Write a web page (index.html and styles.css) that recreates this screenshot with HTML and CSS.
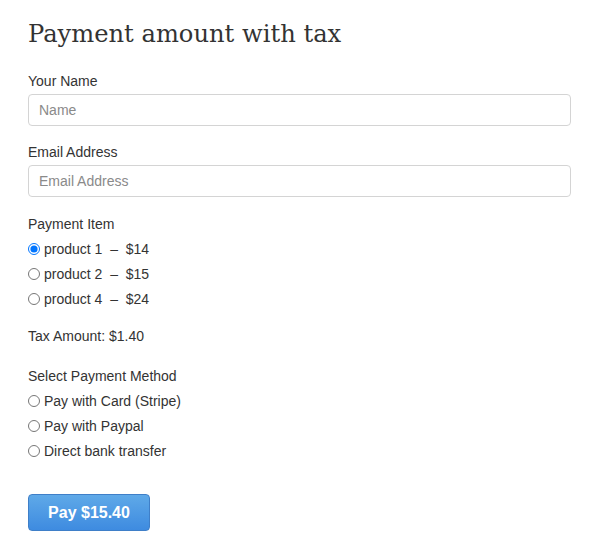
FILE: index.html
```html
<!DOCTYPE html>
<html lang="en">
<head>
  <meta charset="UTF-8" />
  <meta name="viewport" content="width=device-width, initial-scale=1.0" />
  <title>Payment amount with tax</title>
  <link rel="stylesheet" href="styles.css">
</head>
<body>
  <form class="pay-form">
    <h1>Payment amount with tax</h1>

    <div class="field">
      <label for="name">Your Name</label>
      <input type="text" id="name" placeholder="Name" />
    </div>

    <div class="field">
      <label for="email">Email Address</label>
      <input type="text" id="email" placeholder="Email Address" />
    </div>

    <div class="group">
      <div class="group-title">Payment Item</div>
      <label class="option"><input type="radio" name="item" checked /> product 1 &nbsp;–&nbsp; $14</label>
      <label class="option"><input type="radio" name="item" /> product 2 &nbsp;–&nbsp; $15</label>
      <label class="option"><input type="radio" name="item" /> product 4 &nbsp;–&nbsp; $24</label>
    </div>

    <p class="tax">Tax Amount: $1.40</p>

    <div class="group">
      <div class="group-title">Select Payment Method</div>
      <label class="option"><input type="radio" name="method" /> Pay with Card (Stripe)</label>
      <label class="option"><input type="radio" name="method" /> Pay with Paypal</label>
      <label class="option"><input type="radio" name="method" /> Direct bank transfer</label>
    </div>

    <button type="button" class="pay-btn">Pay $15.40</button>
  </form>
</body>
</html>
```

FILE: styles.css
```css
body {
  margin: 0;
  padding: 0;
  background: #fff;
  color: #333;
  font-family: 'Liberation Sans', Arial, sans-serif;
  font-size: 14px;
}

.pay-form {
  width: 543px;
  padding: 18px 28px;
}

h1 {
  margin: 0 0 21px;
  font-family: 'DejaVu Serif', Georgia, serif;
  font-weight: normal;
  font-size: 24.2px;
  line-height: 32px;
  color: #333;
}

.field {
  margin-bottom: 16px;
}

.field + .group {
  margin-top: -2px;
}

.field label {
  display: block;
  line-height: 20px;
  margin-bottom: 3px;
}

.field input {
  box-sizing: border-box;
  width: 100%;
  height: 32px;
  padding: 0 10px;
  border: 1px solid #d4d4d4;
  border-radius: 4px;
  font-family: inherit;
  font-size: 14px;
  color: #333;
}

.field input::placeholder {
  color: #8a8a8a;
}

.group-title,
.option {
  display: flex;
  align-items: center;
  height: 25px;
}

.option input {
  margin: 0 4px 0 0;
  width: 12px;
  height: 12px;
}

.tax {
  margin: 13px 0 14px;
  line-height: 25px;
}

.pay-btn {
  margin-top: 31px;
  width: 122px;
  height: 37px;
  border: 1px solid #3f7fc8;
  border-radius: 4px;
  background: linear-gradient(to bottom, #5fa9e8, #3e8be0);
  color: #fff;
  font-family: inherit;
  font-size: 16px;
  font-weight: bold;
}
```
